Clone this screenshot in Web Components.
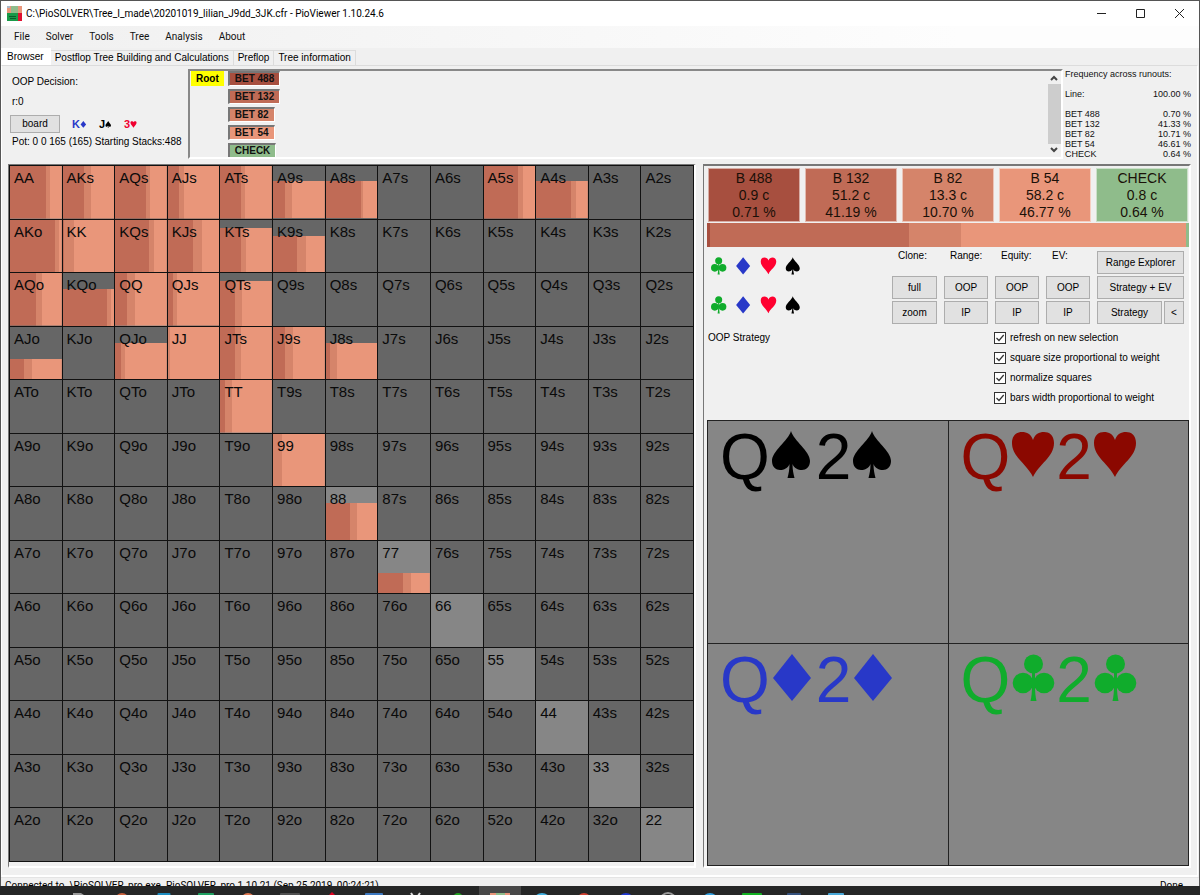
<!DOCTYPE html>
<html lang="en">
<head>
<meta charset="utf-8">
<title>PioViewer 1.10.24.6</title>
<style>
  :root {
    --face: #f0f0f0;
    --b488: #a74f3f;
    --b132: #c06b56;
    --b82: #d5846a;
    --b54: #e9967a;
    --check: #8fbc8b;
    --ui: "Liberation Sans", Arial, sans-serif;
    --arial: "Liberation Sans", Arial, sans-serif;
    --segoe: Roboto, sans-serif;
  }
  html, body { margin: 0; height: 100%; }
  body { background: #252626; color: #000; overflow: hidden; }
</style>
</head>
<body>
<pio-window></pio-window>

<script>
  const SUITS = {
    s: '<path d="M21 0C24 10 40 20 40 30C40 36 36 39 32 39C28 39 24 37 22.5 33C22.5 39 23.5 43 24.5 47H17.5C18.5 43 19.5 39 19.5 33C18 37 14 39 10 39C6 39 2 36 2 30C2 20 18 10 21 0Z"/>',
    h: '<path d="M23 46C17 33 2 26 2 12C2 4 7 1 12 1C17 1 21 3 23 9C25 3 29 1 34 1C39 1 44 4 44 12C44 26 29 33 23 46Z"/>',
    d: '<path d="M22 0L41 24L22 47L3 24Z"/>',
    c: '<circle cx="23.5" cy="10" r="9.5"/><circle cx="13" cy="29" r="10.3"/><circle cx="34" cy="29" r="10.3"/><path d="M22 14H25V26L30 31L25 31C25 38 25.5 43 26.5 47H20.5C21.5 43 22 38 22 31L17 31L22 26Z"/>'
  };

  class Base extends HTMLElement {
    connectedCallback() {
      if (this.shadowRoot) return;
      this.attachShadow({ mode: 'open' }).innerHTML =
        `<style>*{box-sizing:border-box}${this.css()}</style>${this.html()}`;
    }
    css() { return ':host{display:block}'; }
    html() { return '<slot></slot>'; }
    attr(name) { return this.getAttribute(name) || ''; }
  }

  class SuitIcon extends Base {
    css() {
      return `:host{display:inline-block;width:46px;height:48px}
        svg{display:block;width:100%;height:100%;fill:currentColor}`;
    }
    html() { return `<svg viewBox="0 0 46 48" aria-hidden="true">${SUITS[this.attr('suit')]}</svg>`; }
  }

  class TitleBar extends Base {
    css() {
      return `:host{display:flex;align-items:center;height:25px;background:#fff;padding-left:6px}
        .logo{width:15px;height:15px;margin-right:4px}
        h1{flex:1;margin:0;font:400 10px/16px var(--segoe);white-space:nowrap}
        button{width:39px;height:25px;border:0;padding:0;background:none;display:grid;place-items:center}
        button svg{width:11px;height:11px;fill:none;stroke:#222}`;
    }
    html() {
      return `<svg class="logo" viewBox="0 0 15 15" aria-hidden="true">
          <path fill="#e9967a" d="M0 0h4v7H0z"/><path fill="#8fbc8b" d="M4 0h7v7H4z"/><path fill="#e9967a" d="M11 0h4v7h-4z"/>
          <path fill="#a9b9c9" d="M0 0h3v2H0z"/><path fill="#189a48" d="M0 7h11v8H0z"/><path fill="#e01030" d="M11 7h4v8h-4z"/><path stroke="#0c5a2c" d="M2 10.5h7M3 12.5h6"/></svg>
        <h1><slot></slot></h1>
        <button aria-label="Minimize"><svg viewBox="0 0 11 11"><path d="M1 5.5h9"/></svg></button>
        <button aria-label="Maximize"><svg viewBox="0 0 11 11"><path d="M1.5 1.5h8v8h-8z"/></svg></button>
        <button aria-label="Close"><svg viewBox="0 0 11 11"><path d="M1 1l9 9M10 1l-9 9"/></svg></button>`;
    }
  }

  class MenuBar extends Base {
    css() {
      return `:host{display:flex;height:22px;padding:0 5px;background:linear-gradient(90deg,#f0f0f0,#fdfdfd 80%)}
        button{border:0;background:none;padding:0 8px;font:400 10px/22px var(--segoe);color:#111}`;
    }
    html() { return this.attr('items').split(',').map(t => `<button>${t}</button>`).join(''); }
  }

  class TabStrip extends Base {
    css() {
      return `:host{display:flex;align-items:flex-end;height:17px}
        button{border:1px solid #dcdcdc;border-left:0;border-bottom:0;background:#f0f0f0;height:15px;padding:0 4px;
          font:400 10px/14px var(--ui)}
        button[aria-selected=true]{height:17px;background:#fff;border-color:#fff;padding:0 6px 1px}`;
    }
    html() {
      return this.attr('items').split(',').map((t, i) =>
        `<button role="tab" aria-selected="${i === 0}">${t}</button>`).join('');
    }
  }

  class PushButton extends Base {
    css() {
      return `:host{display:block}
        button{width:100%;height:100%;padding:0;border:1px solid #adadad;background:#e1e1e1;color:#000;
          font:400 10px/16px var(--ui)}`;
    }
    html() { return '<button><slot></slot></button>'; }
  }

  class BoardCard extends Base {
    css() {
      return `:host{display:inline-flex;align-items:center;font:700 11px/16px var(--ui)}
        suit-icon{width:7px;height:7px}`;
    }
    html() { return `<span>${this.attr('rank')}</span><suit-icon suit="${this.attr('suit')}"></suit-icon>`; }
  }

  class DecisionPanel extends Base {
    css() {
      return `:host{display:block;font:400 10px/16px var(--ui);white-space:nowrap;padding:8px 0 0 4px}
        p{margin:0 0 4px}
        .board{display:flex;align-items:center;gap:12px;margin-top:5px}
        push-button{width:50px;height:18px;margin-left:-2px}
        .pot{margin:1px 0 0}`;
    }
    html() {
      return `<p>OOP Decision:</p><p>r:0</p>
        <div class="board"><push-button>board</push-button>
          <board-card rank="K" suit="d" style="color:#2838c8"></board-card>
          <board-card rank="J" suit="s"></board-card>
          <board-card rank="3" suit="h" style="color:#f00030"></board-card></div>
        <p class="pot">Pot: 0 0 165 (165) Starting Stacks:488</p>`;
    }
  }

  class ActionTree extends Base {
    css() {
      return `:host{display:flex;border:2px solid;border-color:#888 #fff #fff #888;overflow:hidden;font:700 10px/12px var(--arial)}
        .node{border:1px solid;border-color:#777 #fff #fff #777;border-width:2px 1px 1px 2px;padding:0 5px;height:15px;color:#111;white-space:nowrap}
        .root{background:#ff0;height:15px;padding:2px 5px 0;margin:0 4px 0 1px}
        .list{flex:1;display:flex;flex-direction:column;align-items:flex-start;gap:3px}
        .bar{width:14px;display:flex;flex-direction:column;align-items:center;justify-content:space-between;padding:4px 0}
        .bar i{flex:1;width:13px;background:#cdcdcd;margin:3px 0}
        svg{width:8px;height:6px;fill:none;stroke:#444;stroke-width:2}`;
    }
    html() {
      const nodes = [['BET 488', 'b488'], ['BET 132', 'b132'], ['BET 82', 'b82'], ['BET 54', 'b54'], ['CHECK', 'check']];
      return `<div class="root">Root</div>
        <div class="list">${nodes.map(([t, c]) => `<div class="node" style="background:var(--${c})">${t}</div>`).join('')}</div>
        <div class="bar" aria-hidden="true"><svg viewBox="0 0 8 6"><path d="M1 5l3-3 3 3"/></svg><i></i><svg viewBox="0 0 8 6"><path d="M1 1l3 3 3-3"/></svg></div>`;
    }
  }

  class RunoutFrequency extends Base {
    css() {
      return `:host{display:block;font:400 9px/10px var(--arial);white-space:nowrap;color:#111}
        table{width:100%;border-collapse:collapse}
        caption{text-align:left;padding-bottom:10px}
        th,td{font-weight:400;padding:0;text-align:left}
        td{text-align:right}
        .line th,.line td{padding-bottom:10px}`;
    }
    html() {
      const rows = [['BET 488', '0.70'], ['BET 132', '41.33'], ['BET 82', '10.71'], ['BET 54', '46.61'], ['CHECK', '0.64']];
      return `<table><caption>Frequency across runouts:</caption>
        <tr class="line"><th scope="row">Line:</th><td>100.00 %</td></tr>
        ${rows.map(([a, b]) => `<tr><th scope="row">${a}</th><td>${b} %</td></tr>`).join('')}</table>`;
    }
  }

  class HandCell extends Base {
    css() {
      const [h, a, b] = (this.attr('mix') || '0,0,0').split(',');
      return `:host{display:block;min-height:0;padding:3px 0 0 4px;color:#0a0a0a;font:400 15px/17px var(--arial);
          background:linear-gradient(90deg,var(--b132) ${a}%,var(--b82) ${a}% ${b}%,var(--b54) ${b}%) bottom/100% ${h}% no-repeat
          ${this.hasAttribute('pair') ? '#868686' : '#666'}}`;
    }
  }

  /* Per hand: filled height, end of the BET 132 share, end of the BET 82 share (percent). */
  const MIX = {
    AA: '100,69,78', AKs: '100,41,54', AQs: '100,60,68', AJs: '100,21,31', ATs: '100,40,49', A9s: '70,24,36',
    A8s: '70,68,72', A5s: '100,67,76', A4s: '70,68,78',
    AKo: '100,87,95', KK: '100,2,22', KQs: '100,66,75', KJs: '100,49,66', KTs: '85,40,50', K9s: '70,47,63',
    AQo: '100,50,61', KQo: '70,87,95', QQ: '100,24,39', QJs: '100,9,18', QTs: '85,30,43',
    AJo: '39,28,42', QJo: '70,11,20', JJ: '100,0,4', JTs: '100,30,40', J9s: '100,23,39', J8s: '70,7,22',
    TT: '100,10,23', 99: '100,0,17', 88: '70,48,60', 77: '39,48,63'
  };

  class RangeGrid extends Base {
    css() {
      return `:host{display:grid;grid-template:repeat(13,minmax(0,1fr))/repeat(13,minmax(0,1fr));gap:1px;
          background:#111;border:1px solid #111}`;
    }
    html() {
      const r = [...'AKQJT98765432'];
      return r.map((row, i) => r.map((col, j) => {
        const hand = i === j ? row + col : i < j ? row + col + 's' : col + row + 'o';
        return `<hand-cell ${i === j ? 'pair' : ''} mix="${MIX[hand] || ''}">${hand}</hand-cell>`;
      }).join('')).join('');
    }
  }

  class ActionCard extends Base {
    css() {
      return `:host{display:block;flex:1;height:54px;padding-top:1px;text-align:center;font:400 14px/17px var(--arial);color:#1a1008;
          border:1px solid #fff8}
        div{white-space:nowrap}`;
    }
    html() { return `<div>${this.attr('name')}</div><div>${this.attr('combos')} c</div><div>${this.attr('share')} %</div>`; }
  }

  class StrategyBar extends Base {
    css() { return ':host{display:flex;height:24px;margin-top:1px}'; }
    html() {
      return [['b488', 0.71], ['b132', 41.19], ['b82', 10.70], ['b54', 46.77], ['check', 0.64]]
        .map(([c, v]) => `<i style="background:var(--${c});flex:${v * 100} 0 0"></i>`).join('');
    }
  }

  class SuitRow extends Base {
    css() {
      return `:host{display:flex;gap:8px}
        suit-icon{width:17px;height:18px}
        [suit=c]{color:#10ac2c}[suit=d]{color:#2838c8}[suit=h]{color:#ff0030}[suit=s]{color:#000}`;
    }
    html() { return ['c', 'd', 'h', 's'].map(s => `<suit-icon suit="${s}"></suit-icon>`).join(''); }
  }

  class CheckOption extends Base {
    css() {
      return `label{display:flex;align-items:center;gap:4px;height:20px;font:400 10px/16px var(--ui);white-space:nowrap}
        input{appearance:none;width:12px;height:12px;margin:0;border:1px solid #333;background:#fff}
        input:checked{background:#fff url('data:image/svg+xml,<svg xmlns="http://www.w3.org/2000/svg" viewBox="0 0 10 10"><path d="M1.5 5l2.5 2.5L8.7 2" fill="none" stroke="%23333" stroke-width="1.2"/></svg>')}`;
    }
    html() { return '<label><input type="checkbox" checked><slot></slot></label>'; }
  }

  class ControlPanel extends Base {
    css() {
      return `:host{display:flex;justify-content:space-between;font:400 10px/16px var(--ui);padding:4px 5px 0 1px}
        .suits{padding:6px 0 0 2px}
        suit-row+suit-row{margin-top:21px}
        .mode{margin:16px 0 0 -2px}
        .grid{display:grid;grid-template-columns:45px 44px 44px 44px 87px;grid-auto-rows:23px;gap:2px 7px}
        .grid>span{padding-left:6px;margin-top:-3px}
        .pair{display:grid;grid-template-columns:1fr 20px;gap:2px}
        .checks{margin:4px 0 0 102px}`;
    }
    html() {
      return `<div class="suits"><suit-row></suit-row><suit-row></suit-row><div class="mode">OOP Strategy</div></div>
        <div><div class="grid">
          <span>Clone:</span><span>Range:</span><span>Equity:</span><span>EV:</span><push-button>Range Explorer</push-button>
          <push-button>full</push-button><push-button>OOP</push-button><push-button>OOP</push-button><push-button>OOP</push-button><push-button>Strategy + EV</push-button>
          <push-button>zoom</push-button><push-button>IP</push-button><push-button>IP</push-button><push-button>IP</push-button>
          <div class="pair"><push-button>Strategy</push-button><push-button>&lt;</push-button></div>
        </div>
        <div class="checks">
          <check-option>refresh on new selection</check-option>
          <check-option>square size proportional to weight</check-option>
          <check-option>normalize squares</check-option>
          <check-option>bars width proportional to weight</check-option>
        </div></div>`;
    }
  }

  class ComboCard extends Base {
    css() {
      return ':host{display:block;min-width:0;background:#868686;padding:4px 0 0 12px;font:400 64px/64px var(--arial);white-space:nowrap}';
    }
    html() {
      const s = `<suit-icon suit="${this.attr('suit')}"></suit-icon>`;
      return `Q${s}2${s}`;
    }
  }

  class StrategyPanel extends Base {
    css() {
      return `:host{display:flex;flex-direction:column;padding:2px 0 0 3px}
        .cards{display:flex;gap:5px;padding:0 1px}
        .combos{flex:1;display:grid;grid-template:1fr 1fr/1fr 1fr;gap:1px;background:#222;border:1px solid #222;margin-top:12px}`;
    }
    html() {
      return `<div class="cards">
          <action-card name="B 488" combos="0.9" share="0.71" style="background:var(--b488)"></action-card>
          <action-card name="B 132" combos="51.2" share="41.19" style="background:var(--b132)"></action-card>
          <action-card name="B 82" combos="13.3" share="10.70" style="background:var(--b82)"></action-card>
          <action-card name="B 54" combos="58.2" share="46.77" style="background:var(--b54)"></action-card>
          <action-card name="CHECK" combos="0.8" share="0.64" style="background:var(--check)"></action-card>
        </div>
        <strategy-bar></strategy-bar>
        <control-panel></control-panel>
        <div class="combos">
          <combo-card suit="s" style="color:#000"></combo-card><combo-card suit="h" style="color:#8b0800"></combo-card>
          <combo-card suit="d" style="color:#2838c8"></combo-card><combo-card suit="c" style="color:#10ac2c"></combo-card>
        </div>`;
    }
  }

  class StatusBar extends Base {
    css() {
      return `:host{display:flex;justify-content:space-between;height:9px;padding:0 16px 0 4px;
          font:400 10px/16px var(--segoe);border-top:1px solid #e4e4e4;white-space:nowrap}`;
    }
    html() { return '<span>Connected to .\\PioSOLVER_pro.exe. PioSOLVER_pro 1.10.21 (Sep 25 2019, 00:24:21)</span><span>Done</span>'; }
  }

  class TaskBar extends Base {
    css() {
      return `:host{display:flex;position:relative;height:9px;padding-left:59px;background:#252626;overflow:hidden}
        span{width:42px;height:9px}
        .on{background:#484848}
        svg{display:block;width:42px;height:9px}`;
    }
    html() {
      const round = (c, r = 7) => `<circle cx="21" cy="${7 + r}" r="${r}" fill="${c}"/>`;
      const box = (c, w = 16) => `<rect x="${21 - w / 2}" y="7" width="${w}" height="9" rx="1" fill="${c}"/>`;
      const icons = [
        '<path d="M14 7h8l6 4H14z" fill="#999"/>', round('#c8603c'), box('#1c8cc0', 13), box('#1ea060'), round('#e07850'),
        box('#505050', 20), '<path d="M21 6l5 5H16z" fill="#e00020"/>', box('#3c78c0', 18),
        '<path d="M16 7l2 3M25 7l-2 3" stroke="#ddd" stroke-width="2"/>', round('#20a020', 5),
        '<path d="M11 7h6v3h-6z" fill="#e9967a"/><path d="M17 7h9v3h-9z" fill="#8fbc8b"/><path d="M26 7h5v3h-5z" fill="#e9967a"/>',
        round('#40b0e0', 9), round('#d04030'), round('#2038d0', 8),
        '<circle cx="21" cy="15" r="8" fill="none" stroke="#999" stroke-width="2"/>', round('#30a0e0', 8),
        box('#10b020', 20), box('#34507c', 14), box('#48a8d8')];
      return icons.map((s, i) => `<span class="${i === 10 ? 'on' : ''}"><svg viewBox="0 0 42 9" aria-hidden="true">${s}</svg></span>`).join('');
    }
  }

  class PioWindow extends Base {
    css() {
      return `:host{display:flex;flex-direction:column;height:100vh}
        .frame{flex:1;min-height:0;display:flex;flex-direction:column;background:var(--face);border:1px solid #555;border-bottom:0}
        .page{flex:1;min-height:0;display:flex;flex-direction:column;border:1px solid;border-width:1px 1px 2px;border-color:#dcdcdc #fff #fff;padding:3px 6px 7px;margin:0 1px 0 0}
        .top{display:grid;grid-template-columns:180px minmax(0,1fr) 128px;height:90px;margin-bottom:5px}
        decision-panel{margin-top:-3px}
        runout-frequency{padding-left:2px}
        .main{flex:1;min-height:0;display:grid;grid-template-columns:688fr 488fr;gap:7px}
        .well{display:grid;border:2px solid;border-color:#777 #fff #fff #777;min-height:0;min-width:0;border-width:2px 2px 2px 1px}
        .left{padding-bottom:4px;border-top-width:1px}`;
    }
    html() {
      return `<div class="frame">
          <title-bar>C:\\PioSOLVER\\Tree_I_made\\20201019_lilian_J9dd_3JK.cfr - PioViewer 1.10.24.6</title-bar>
          <menu-bar items="File,Solver,Tools,Tree,Analysis,About"></menu-bar>
          <tab-strip items="Browser,Postflop Tree Building and Calculations,Preflop,Tree information"></tab-strip>
          <main class="page">
            <div class="top"><decision-panel></decision-panel><action-tree></action-tree><runout-frequency></runout-frequency></div>
            <div class="main"><div class="well left"><range-grid></range-grid></div><div class="well"><strategy-panel></strategy-panel></div></div>
          </main>
          <status-bar></status-bar>
        </div>
        <task-bar></task-bar>`;
    }
  }

  const elements = {
    'suit-icon': SuitIcon, 'title-bar': TitleBar, 'menu-bar': MenuBar, 'tab-strip': TabStrip, 'push-button': PushButton,
    'board-card': BoardCard, 'decision-panel': DecisionPanel, 'action-tree': ActionTree, 'runout-frequency': RunoutFrequency,
    'hand-cell': HandCell, 'range-grid': RangeGrid, 'action-card': ActionCard, 'strategy-bar': StrategyBar, 'suit-row': SuitRow,
    'check-option': CheckOption, 'control-panel': ControlPanel, 'combo-card': ComboCard, 'strategy-panel': StrategyPanel,
    'status-bar': StatusBar, 'task-bar': TaskBar, 'pio-window': PioWindow
  };
  for (const [name, cls] of Object.entries(elements)) customElements.define(name, cls);
</script>
</body>
</html>
